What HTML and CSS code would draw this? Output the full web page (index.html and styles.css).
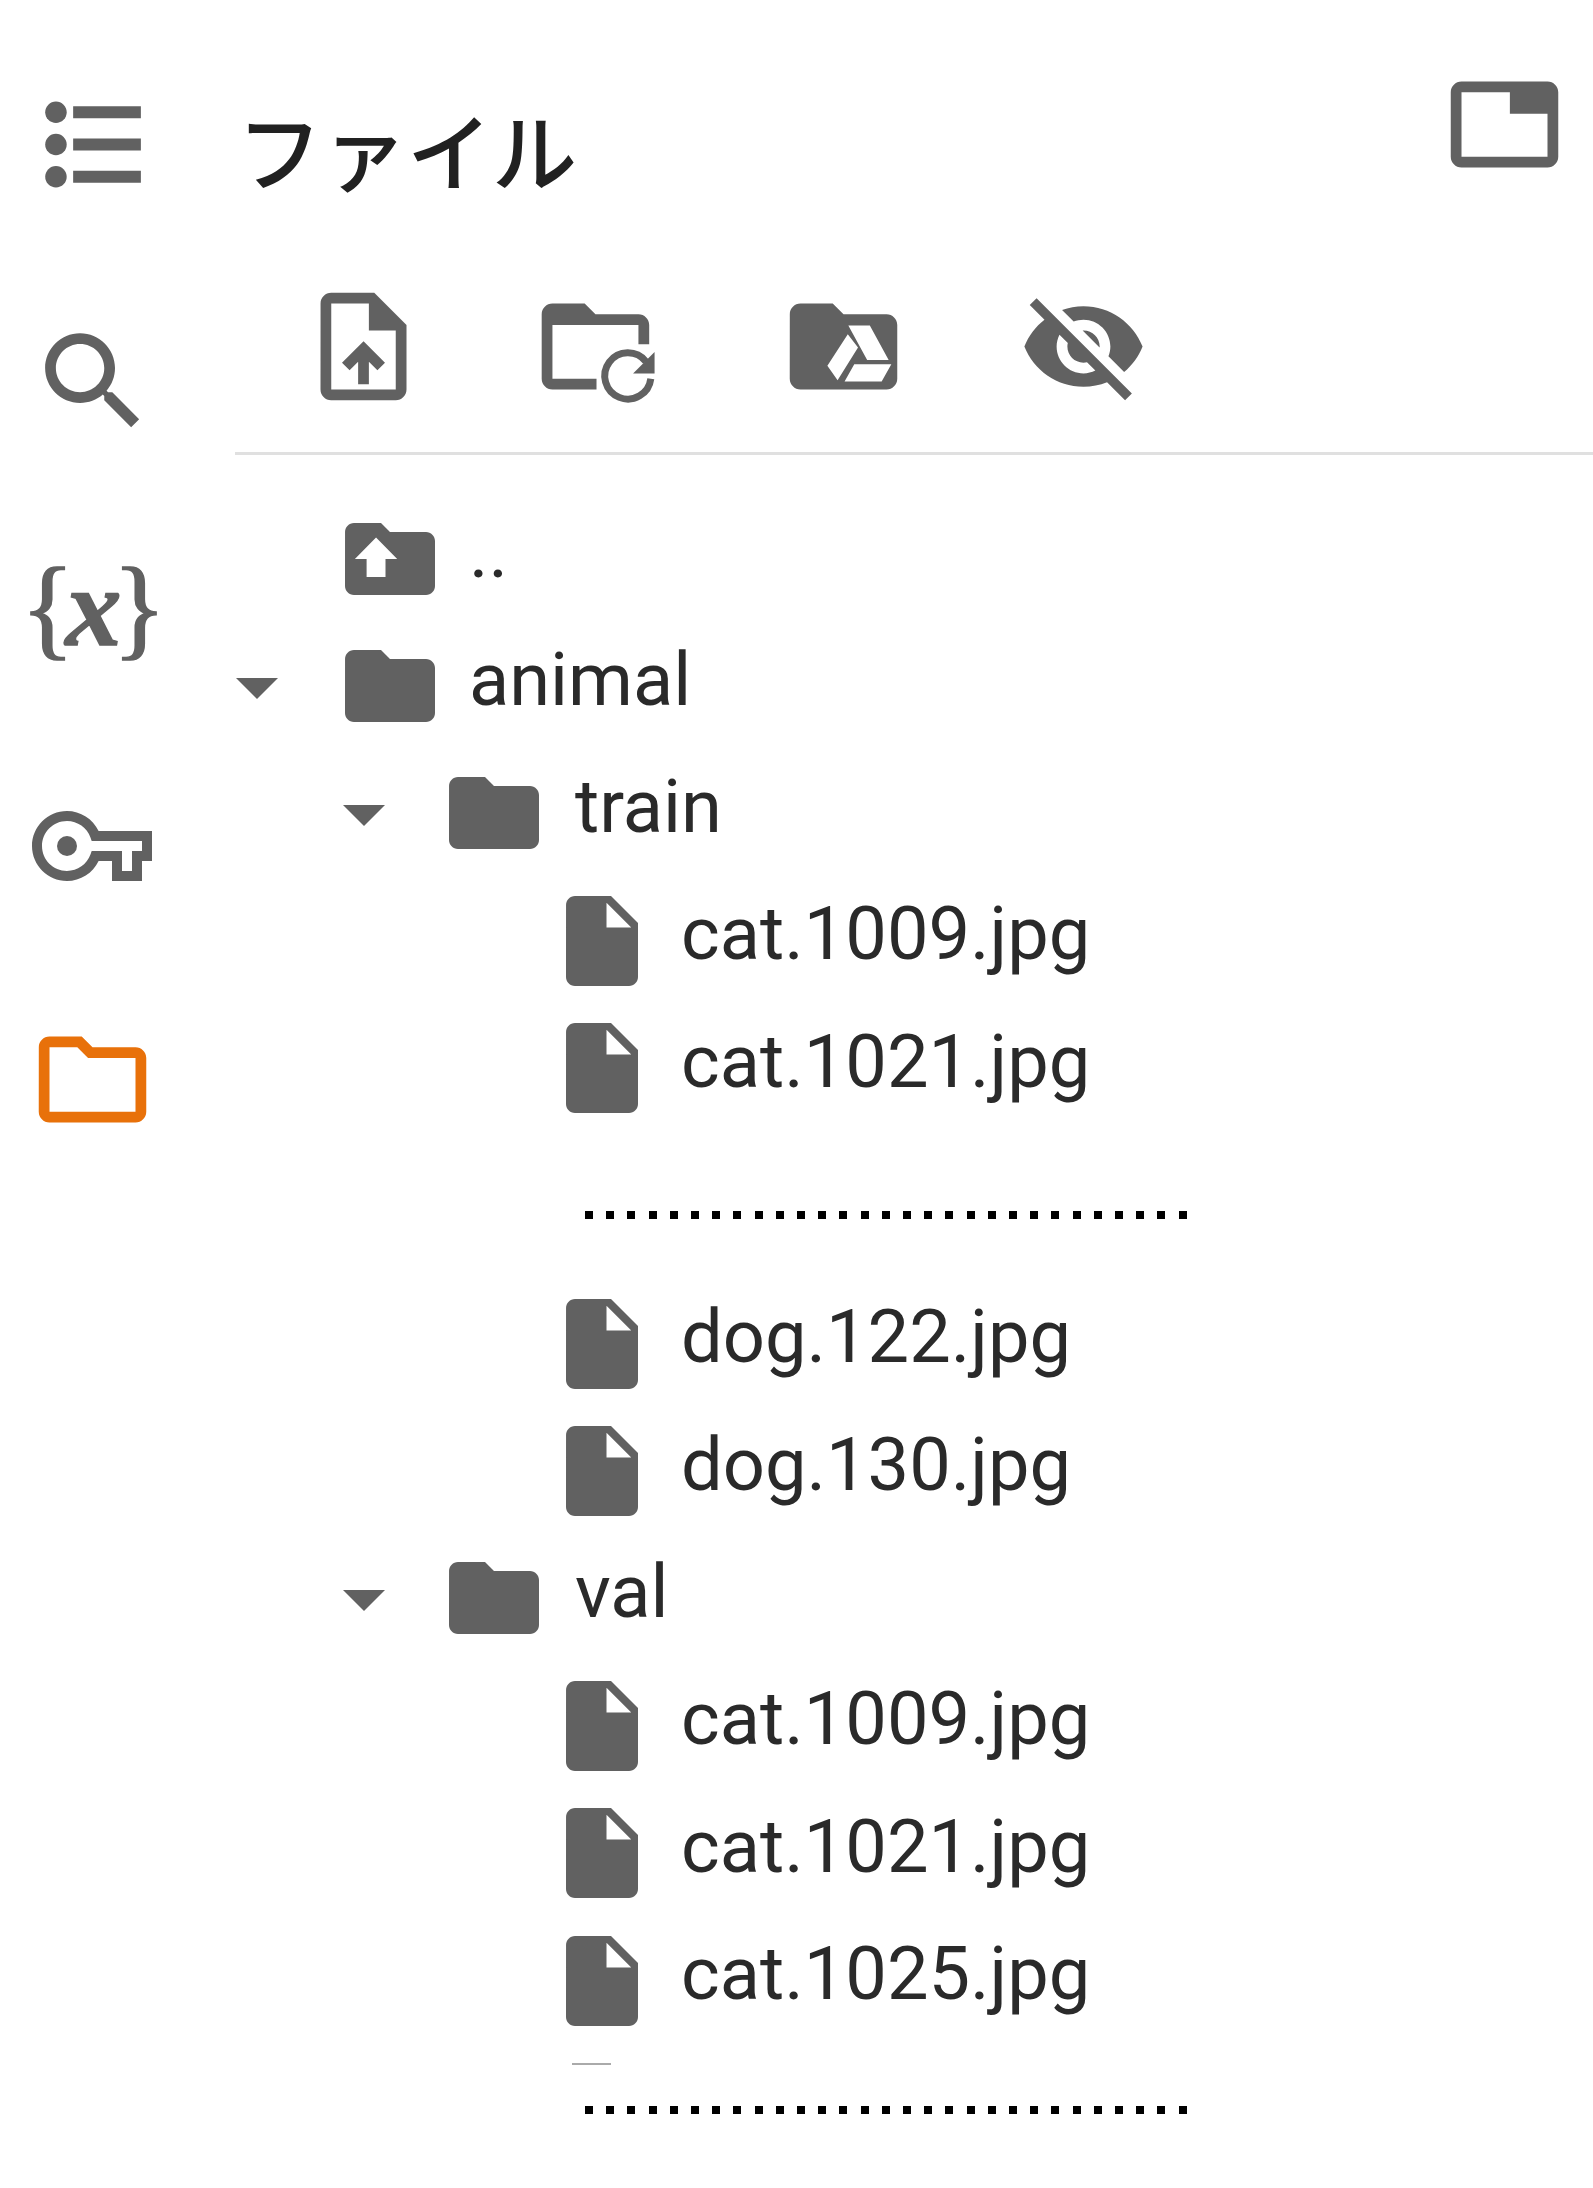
FILE: index.html
```html
<!DOCTYPE HTML>
<html>
	<head>
		<meta charset="utf-8">
		<title>ファイル</title>
		<link rel="stylesheet" href="styles.css">
	</head>

	<body>
		<svg class="defs" width="0" height="0">
			<symbol id="folder" viewBox="0 0 24 24"><path d="M10 4H4c-1.1 0-1.99.9-1.99 2L2 18c0 1.1.9 2 2 2h16c1.1 0 2-.9 2-2V8c0-1.1-.9-2-2-2h-8l-2-2z"/></symbol>
			<symbol id="file" viewBox="0 0 24 24"><path d="M6 2c-1.1 0-1.99.9-1.99 2L4 20c0 1.1.89 2 1.99 2H18c1.1 0 2-.9 2-2V8l-6-6H6zm7 7V3.5L18.5 9H13z"/></symbol>
			<symbol id="arrow" viewBox="7 10 10 5"><path d="M7 10l5 5 5-5z"/></symbol>
		</svg>

		<div class="app">
			<nav class="rail">
				<div class="rail-item">
					<svg class="icon" viewBox="0 0 24 24">
						<circle cx="5.2" cy="6" r="2"/><circle cx="5.2" cy="12" r="2"/><circle cx="5.2" cy="18" r="2"/>
						<path d="M8.4 4.9H21v2.2H8.4zM8.4 10.9H21v2.2H8.4zM8.4 16.9H21v2.2H8.4z"/>
					</svg>
				</div>
				<div class="rail-item">
					<svg class="icon search" viewBox="0 0 24 24"><path d="M15.5 14h-.79l-.28-.27C15.41 12.59 16 11.11 16 9.5 16 5.91 13.09 3 9.5 3S3 5.91 3 9.5 5.91 16 9.5 16c1.61 0 3.09-.59 4.23-1.57l.27.28v.79l5 4.99L20.49 19l-4.99-5zm-6 0C7.01 14 5 11.99 5 9.5S7.01 5 9.5 5 14 7.01 14 9.5 11.99 14 9.5 14z"/></svg>
				</div>
				<div class="rail-item vars"><span class="vars-text">{<i>x</i>}</span></div>
				<div class="rail-item">
					<svg class="icon key" viewBox="0 0 24 24"><path d="M22 19h-6v-4h-2.68c-1.14 2.42-3.62 4-6.32 4-3.86 0-7-3.14-7-7s3.14-7 7-7c2.7 0 5.17 1.58 6.32 4H24v6h-2v4zm-4-2h2v-4h2v-2H11.94l-.23-.67C11.01 8.34 9.11 7 7 7c-2.76 0-5 2.24-5 5s2.24 5 5 5c2.11 0 4.01-1.34 4.71-3.33l.23-.67H18v4z"/><circle cx="7" cy="12" r="2"/></svg>
				</div>
				<div class="rail-item">
					<svg class="icon active" viewBox="0 0 24 24"><path d="M9.17 6l2 2H20v10H4V6h5.17M10 4H4c-1.1 0-1.99.9-1.99 2L2 18c0 1.1.9 2 2 2h16c1.1 0 2-.9 2-2V8c0-1.1-.9-2-2-2h-8l-2-2z"/></svg>
				</div>
			</nav>

			<main class="panel">
				<header class="panel-head">
					<h1 class="title">ファイル</h1>
					<svg class="icon" viewBox="0 0 24 24"><path fill-rule="evenodd" d="M4 4h16c1.1 0 2 .9 2 2v12c0 1.1-.9 2-2 2H4c-1.1 0-2-.9-2-2V6c0-1.1.9-2 2-2zm0 2v12h16v-8h-7V6H4z"/></svg>
				</header>

				<div class="toolbar">
					<svg class="icon" viewBox="0 0 24 24"><path d="M14 2H6c-1.1 0-1.99.9-1.99 2L4 20c0 1.1.89 2 1.99 2H18c1.1 0 2-.9 2-2V8l-6-6zm4 18H6V4h7v5h5v11zM8 15.01l1.41 1.41L11 14.84V19h2v-4.16l1.59 1.59L16 15.01 12.01 11z"/></svg>
					<svg class="icon" viewBox="1.5 0 24 24">
						<path d="M4 4h6l2 2h8c1.1 0 2 .9 2 2v3.6h-2V8H4v10h8.2v2H4c-1.1 0-2-.9-2-2V6c0-1.1.9-2 2-2z"/>
						<path class="refresh" d="M21.4 14.8A4.3 4.3 0 1 0 22.3 18"/>
						<path d="M23 13v4h-4z"/>
					</svg>
					<svg class="icon" viewBox="0 0 24 24">
						<use href="#folder"/>
						<path class="cut" d="M12.9 8.1h4l3.5 6.4h-4zM12.8 9.7l1.9 2.5-3.8 6.1-1.9-2.7zM14 15.3h6.9l-1.8 3.2h-6.9z"/>
					</svg>
					<svg class="icon" viewBox="0 0 24 24"><path d="M12 7c2.76 0 5 2.24 5 5 0 .65-.13 1.26-.36 1.83l2.92 2.92c1.51-1.26 2.7-2.89 3.43-4.75-1.73-4.39-6-7.5-11-7.5-1.4 0-2.74.25-3.98.7l2.16 2.16C10.74 7.13 11.35 7 12 7zM2 4.27l2.28 2.28.46.46C3.08 8.3 1.78 10.02 1 12c1.73 4.39 6 7.5 11 7.5 1.55 0 3.03-.3 4.38-.84l.42.42L19.73 22 21 20.73 3.27 3 2 4.27zM7.53 9.8l1.55 1.55c-.05.21-.08.43-.08.65 0 1.66 1.34 3 3 3 .22 0 .44-.03.65-.08l1.55 1.55c-.67.33-1.41.53-2.2.53-2.76 0-5-2.24-5-5 0-.79.2-1.53.53-2.2zm4.31-.78l3.15 3.15.02-.16c0-1.66-1.34-3-3-3l-.17.01z"/></svg>
				</div>

				<div class="tree">
					<div class="row depth0">
						<span class="slot"></span>
						<svg class="item-icon" viewBox="0 0 24 24">
							<use href="#folder"/>
							<path class="cut" d="M8.9 7.2l4.7 4.8H11v4H6.8v-4H4.2z"/>
						</svg>
						<span class="name">..</span>
					</div>
					<div class="row depth0">
						<span class="slot"><svg class="caret"><use href="#arrow"/></svg></span>
						<svg class="item-icon"><use href="#folder"/></svg>
						<span class="name">animal</span>
					</div>
					<div class="row depth1">
						<span class="slot"><svg class="caret"><use href="#arrow"/></svg></span>
						<svg class="item-icon"><use href="#folder"/></svg>
						<span class="name">train</span>
					</div>
					<div class="row depth2"><svg class="item-icon"><use href="#file"/></svg><span class="name">cat.1009.jpg</span></div>
					<div class="row depth2"><svg class="item-icon"><use href="#file"/></svg><span class="name">cat.1021.jpg</span></div>

					<div class="gap"><div class="dots"></div></div>

					<div class="row depth2"><svg class="item-icon"><use href="#file"/></svg><span class="name">dog.122.jpg</span></div>
					<div class="row depth2"><svg class="item-icon"><use href="#file"/></svg><span class="name">dog.130.jpg</span></div>
					<div class="row depth1">
						<span class="slot"><svg class="caret"><use href="#arrow"/></svg></span>
						<svg class="item-icon"><use href="#folder"/></svg>
						<span class="name">val</span>
					</div>
					<div class="row depth2"><svg class="item-icon"><use href="#file"/></svg><span class="name">cat.1009.jpg</span></div>
					<div class="row depth2"><svg class="item-icon"><use href="#file"/></svg><span class="name">cat.1021.jpg</span></div>
					<div class="row depth2"><svg class="item-icon"><use href="#file"/></svg><span class="name">cat.1025.jpg</span></div>

					<div class="cutoff"></div>
					<div class="dots last"></div>
				</div>
			</main>
		</div>
	</body>
</html>
```

FILE: styles.css
```css
body{
	margin: 0;
	background-color: #fff;
	font-family: Roboto, "Noto Sans CJK JP", sans-serif;
	color: #2a2a2a;
}
svg{
	fill: #616161;
}
.defs{
	position: absolute;
}
.app{
	display: flex;
	min-height: 2188px;
}
.icon{
	width: 129px;
	height: 129px;
	flex: none;
}
.rail{
	width: 235px;
	flex: none;
	display: flex;
	flex-direction: column;
	align-items: flex-start;
	gap: 104.7px;
	padding: 80px 0 0 27.5px;
	box-sizing: border-box;
}
.rail-item{
	width: 129px;
	height: 129px;
	display: flex;
	align-items: center;
	justify-content: center;
}
.search{
	margin: 6px 0 0 2px;
}
.vars{
	font-family: "Liberation Serif", serif;
	font-size: 112px;
	color: #616161;
}
.vars-text{
	margin: -8px 0 0 -6px;
	letter-spacing: -9px;
	-webkit-text-stroke: 1.5px #616161;
}
.vars i{
	font-weight: 700;
}
.key{
	width: 120px;
	height: 120px;
}
.active{
	fill: #e8710a;
}
.panel{
	flex: 1;
	min-width: 0;
}
.panel-head{
	height: 282px;
	padding: 60px 24px 0 2px;
	box-sizing: border-box;
	display: flex;
	justify-content: space-between;
	align-items: flex-start;
}
.title{
	margin: 45px 0 0 0;
	font-family: "Noto Sans CJK JP", sans-serif;
	font-size: 85px;
	font-weight: 500;
	line-height: 1;
	color: #212121;
}
.toolbar{
	display: flex;
	gap: 111px;
	padding: 0 0 41px 64px;
	border-bottom: 3px solid #e0e0e0;
}
.refresh{
	fill: none;
	stroke: #616161;
	stroke-width: 1.3;
}
.cut{
	fill: #fff;
}
.tree{
	padding-top: 40px;
}
.row{
	height: 127.4px;
	display: flex;
	align-items: center;
}
.depth0{
	padding-left: 1px;
}
.depth1{
	padding-left: 108px;
}
.depth2{
	padding-left: 313px;
}
.slot{
	width: 100px;
	flex: none;
}
.depth1 .slot{
	width: 97px;
}
.caret{
	display: block;
	width: 42px;
	height: 21px;
	margin-top: 5px;
}
.item-icon{
	width: 108px;
	height: 108px;
	flex: none;
}
.name{
	margin: -14px 0 0 25px;
	font-size: 74px;
}
.depth1 .name{
	margin-left: 27px;
}
.gap{
	height: 148px;
	padding-top: 79px;
	box-sizing: border-box;
}
.dots{
	width: 604px;
	height: 8px;
	margin-left: 350px;
	background-image: repeating-linear-gradient(to right, #000 0, #000 8px, transparent 8px, transparent 21.2px);
}
.cutoff{
	width: 39px;
	height: 2px;
	margin: 19px 0 0 337px;
	background-color: #aaa;
}
.last{
	margin-top: 41px;
}
```
